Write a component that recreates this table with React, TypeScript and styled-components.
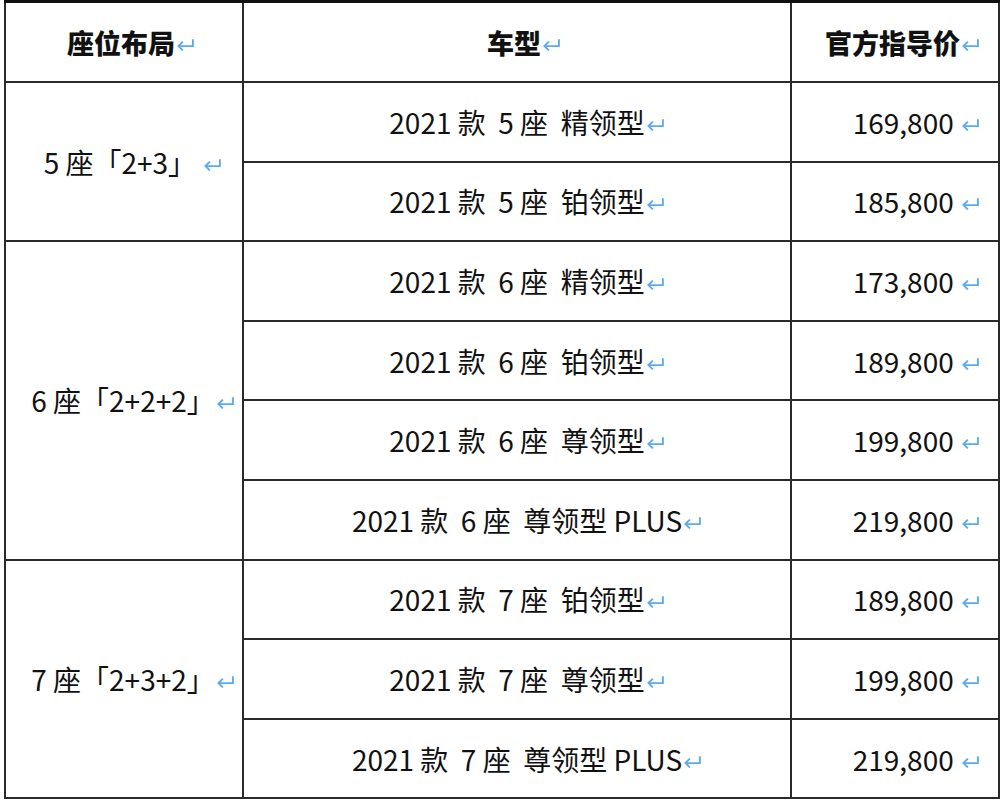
import React from "react"
import styled, { createGlobalStyle } from "styled-components"

const GlobalStyle = createGlobalStyle`
  body {
    margin: 0;
    background: #ffffff;
    font-family: "Noto Sans CJK SC", "Noto Sans", sans-serif;
  }
`

type Group = {
  layout: string
  models: { name: string; price: string }[]
}

const groups: Group[] = [
  {
    layout: "5 座「2+3」 ",
    models: [
      { name: "2021 款  5 座  精领型", price: "169,800" },
      { name: "2021 款  5 座  铂领型", price: "185,800" },
    ],
  },
  {
    layout: "6 座「2+2+2」",
    models: [
      { name: "2021 款  6 座  精领型", price: "173,800" },
      { name: "2021 款  6 座  铂领型", price: "189,800" },
      { name: "2021 款  6 座  尊领型", price: "199,800" },
      { name: "2021 款  6 座  尊领型 PLUS", price: "219,800" },
    ],
  },
  {
    layout: "7 座「2+3+2」",
    models: [
      { name: "2021 款  7 座  铂领型", price: "189,800" },
      { name: "2021 款  7 座  尊领型", price: "199,800" },
      { name: "2021 款  7 座  尊领型 PLUS", price: "219,800" },
    ],
  },
]

// the blue paragraph mark that trails each cell
const Return = () => (
  <ReturnMark viewBox="0 0 18 12" aria-hidden="true">
    <path d="M16 1 V7.5 H2.5" fill="none" stroke="#5aaaf0" strokeWidth="1.8" />
    <path d="M6.5 3.2 L2.3 7.5 L6.5 11.6" fill="none" stroke="#5aaaf0" strokeWidth="1.8" />
  </ReturnMark>
)

const App = () => {
  return (
    <>
      <GlobalStyle />
      <Page>
        <PriceTable>
          <colgroup>
            <col style={{ width: "238px" }} />
            <col style={{ width: "548px" }} />
            <col style={{ width: "208px" }} />
          </colgroup>
          <thead>
            <tr>
              <HeadCell $align="center">座位布局<Return /></HeadCell>
              <HeadCell $align="center">车型<Return /></HeadCell>
              <HeadCell $align="right">官方指导价<Return /></HeadCell>
            </tr>
          </thead>
          <tbody>
            {groups.map((g) =>
              g.models.map((m, i) => (
                <tr key={m.name}>
                  {i === 0 && (
                    <LayoutCell rowSpan={g.models.length}>
                      {g.layout}
                      <Return />
                    </LayoutCell>
                  )}
                  <ModelCell>
                    {m.name}
                    <Return />
                  </ModelCell>
                  <PriceCell>
                    {m.price} <Return />
                  </PriceCell>
                </tr>
              ))
            )}
          </tbody>
        </PriceTable>
      </Page>
    </>
  )
}
export default App

const Page = styled.div`
  width: 1000px;
  height: 803px;
  padding-left: 4px;
  box-sizing: border-box;
  overflow: hidden;
`
const PriceTable = styled.table`
  width: 994px;
  border-collapse: collapse;
  table-layout: fixed;
  border-top: 3px solid #111;
  color: #111;
`
const HeadCell = styled.th<{ $align: string }>`
  height: 78px;
  padding: 0 18px 0 32px;
  border: 2px solid #2a2a2a;
  border-top: 3px solid #111;
  font-size: 27px;
  font-weight: 900;
  text-align: ${(p) => p.$align};
  white-space: pre;
`
const BodyCell = styled.td`
  height: 77.6px;
  padding: 0;
  border: 2px solid #2a2a2a;
  font-size: 28px;
  font-weight: 400;
  white-space: pre;
`
const LayoutCell = styled(BodyCell)`
  text-align: center;
  padding-left: 18px;
`
const ModelCell = styled(BodyCell)`
  text-align: center;
  padding-left: 20px;
`
const PriceCell = styled(BodyCell)`
  text-align: right;
  padding-right: 18px;
`
const ReturnMark = styled.svg`
  width: 19px;
  height: 13px;
  margin-left: 1px;
  vertical-align: 3px;
`
